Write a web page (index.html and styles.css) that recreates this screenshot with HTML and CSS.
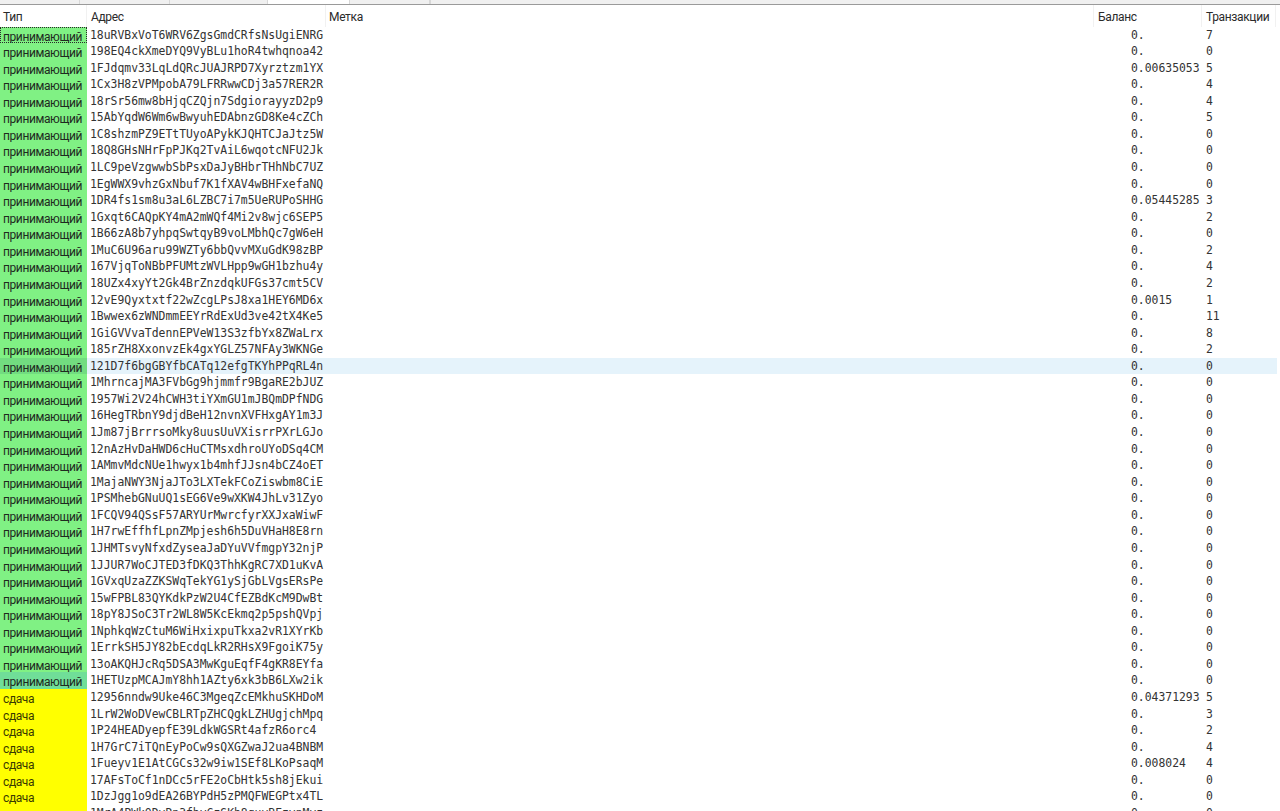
FILE: index.html
```html
<!DOCTYPE html>
<html lang="ru">
<head>
<meta charset="utf-8">
<title>Адреса</title>
<link rel="stylesheet" href="styles.css">
</head>
<body>
<div class="window">
<div class="tabs"><span class="tab t1"></span><span class="tab t2"></span><span class="tab t3"></span><span class="tab active"></span><span class="tab t5"></span><span class="tab t6"></span></div>
<div class="head"><span>Тип</span><span>Адрес</span><span>Метка</span><span>Баланс</span><span>Транзакции</span></div>
<div class="list">
<div class="row"><span class="type recv focus">принимающий</span><span class="addr">18uRVBxVoT6WRV6ZgsGmdCRfsNsUgiENRG</span><span></span><span class="bal">0.</span><span class="tx">7</span></div>
<div class="row"><span class="type recv">принимающий</span><span class="addr">198EQ4ckXmeDYQ9VyBLu1hoR4twhqnoa42</span><span></span><span class="bal">0.</span><span class="tx">0</span></div>
<div class="row"><span class="type recv">принимающий</span><span class="addr">1FJdqmv33LqLdQRcJUAJRPD7Xyrztzm1YX</span><span></span><span class="bal">0.00635053</span><span class="tx">5</span></div>
<div class="row"><span class="type recv">принимающий</span><span class="addr">1Cx3H8zVPMpobA79LFRRwwCDj3a57RER2R</span><span></span><span class="bal">0.</span><span class="tx">4</span></div>
<div class="row"><span class="type recv">принимающий</span><span class="addr">18rSr56mw8bHjqCZQjn7SdgiorayyzD2p9</span><span></span><span class="bal">0.</span><span class="tx">4</span></div>
<div class="row"><span class="type recv">принимающий</span><span class="addr">15AbYqdW6Wm6wBwyuhEDAbnzGD8Ke4cZCh</span><span></span><span class="bal">0.</span><span class="tx">5</span></div>
<div class="row"><span class="type recv">принимающий</span><span class="addr">1C8shzmPZ9ETtTUyoAPykKJQHTCJaJtz5W</span><span></span><span class="bal">0.</span><span class="tx">0</span></div>
<div class="row"><span class="type recv">принимающий</span><span class="addr">18Q8GHsNHrFpPJKq2TvAiL6wqotcNFU2Jk</span><span></span><span class="bal">0.</span><span class="tx">0</span></div>
<div class="row"><span class="type recv">принимающий</span><span class="addr">1LC9peVzgwwbSbPsxDaJyBHbrTHhNbC7UZ</span><span></span><span class="bal">0.</span><span class="tx">0</span></div>
<div class="row"><span class="type recv">принимающий</span><span class="addr">1EgWWX9vhzGxNbuf7K1fXAV4wBHFxefaNQ</span><span></span><span class="bal">0.</span><span class="tx">0</span></div>
<div class="row"><span class="type recv">принимающий</span><span class="addr">1DR4fs1sm8u3aL6LZBC7i7m5UeRUPoSHHG</span><span></span><span class="bal">0.05445285</span><span class="tx">3</span></div>
<div class="row"><span class="type recv">принимающий</span><span class="addr">1Gxqt6CAQpKY4mA2mWQf4Mi2v8wjc6SEP5</span><span></span><span class="bal">0.</span><span class="tx">2</span></div>
<div class="row"><span class="type recv">принимающий</span><span class="addr">1B66zA8b7yhpqSwtqyB9voLMbhQc7gW6eH</span><span></span><span class="bal">0.</span><span class="tx">0</span></div>
<div class="row"><span class="type recv">принимающий</span><span class="addr">1MuC6U96aru99WZTy6bbQvvMXuGdK98zBP</span><span></span><span class="bal">0.</span><span class="tx">2</span></div>
<div class="row"><span class="type recv">принимающий</span><span class="addr">167VjqToNBbPFUMtzWVLHpp9wGH1bzhu4y</span><span></span><span class="bal">0.</span><span class="tx">4</span></div>
<div class="row"><span class="type recv">принимающий</span><span class="addr">18UZx4xyYt2Gk4BrZnzdqkUFGs37cmt5CV</span><span></span><span class="bal">0.</span><span class="tx">2</span></div>
<div class="row"><span class="type recv">принимающий</span><span class="addr">12vE9Qyxtxtf22wZcgLPsJ8xa1HEY6MD6x</span><span></span><span class="bal">0.0015</span><span class="tx">1</span></div>
<div class="row"><span class="type recv">принимающий</span><span class="addr">1Bwwex6zWNDmmEEYrRdExUd3ve42tX4Ke5</span><span></span><span class="bal">0.</span><span class="tx">11</span></div>
<div class="row"><span class="type recv">принимающий</span><span class="addr">1GiGVVvaTdennEPVeW13S3zfbYx8ZWaLrx</span><span></span><span class="bal">0.</span><span class="tx">8</span></div>
<div class="row"><span class="type recv">принимающий</span><span class="addr">185rZH8XxonvzEk4gxYGLZ57NFAy3WKNGe</span><span></span><span class="bal">0.</span><span class="tx">2</span></div>
<div class="row hover"><span class="type recv">принимающий</span><span class="addr">121D7f6bgGBYfbCATq12efgTKYhPPqRL4n</span><span></span><span class="bal">0.</span><span class="tx">0</span></div>
<div class="row"><span class="type recv">принимающий</span><span class="addr">1MhrncajMA3FVbGg9hjmmfr9BgaRE2bJUZ</span><span></span><span class="bal">0.</span><span class="tx">0</span></div>
<div class="row"><span class="type recv">принимающий</span><span class="addr">1957Wi2V24hCWH3tiYXmGU1mJBQmDPfNDG</span><span></span><span class="bal">0.</span><span class="tx">0</span></div>
<div class="row"><span class="type recv">принимающий</span><span class="addr">16HegTRbnY9djdBeH12nvnXVFHxgAY1m3J</span><span></span><span class="bal">0.</span><span class="tx">0</span></div>
<div class="row"><span class="type recv">принимающий</span><span class="addr">1Jm87jBrrrsoMky8uusUuVXisrrPXrLGJo</span><span></span><span class="bal">0.</span><span class="tx">0</span></div>
<div class="row"><span class="type recv">принимающий</span><span class="addr">12nAzHvDaHWD6cHuCTMsxdhroUYoDSq4CM</span><span></span><span class="bal">0.</span><span class="tx">0</span></div>
<div class="row"><span class="type recv">принимающий</span><span class="addr">1AMmvMdcNUe1hwyx1b4mhfJJsn4bCZ4oET</span><span></span><span class="bal">0.</span><span class="tx">0</span></div>
<div class="row"><span class="type recv">принимающий</span><span class="addr">1MajaNWY3NjaJTo3LXTekFCoZiswbm8CiE</span><span></span><span class="bal">0.</span><span class="tx">0</span></div>
<div class="row"><span class="type recv">принимающий</span><span class="addr">1PSMhebGNuUQ1sEG6Ve9wXKW4JhLv31Zyo</span><span></span><span class="bal">0.</span><span class="tx">0</span></div>
<div class="row"><span class="type recv">принимающий</span><span class="addr">1FCQV94QSsF57ARYUrMwrcfyrXXJxaWiwF</span><span></span><span class="bal">0.</span><span class="tx">0</span></div>
<div class="row"><span class="type recv">принимающий</span><span class="addr">1H7rwEffhfLpnZMpjesh6h5DuVHaH8E8rn</span><span></span><span class="bal">0.</span><span class="tx">0</span></div>
<div class="row"><span class="type recv">принимающий</span><span class="addr">1JHMTsvyNfxdZyseaJaDYuVVfmgpY32njP</span><span></span><span class="bal">0.</span><span class="tx">0</span></div>
<div class="row"><span class="type recv">принимающий</span><span class="addr">1JJUR7WoCJTED3fDKQ3ThhKgRC7XD1uKvA</span><span></span><span class="bal">0.</span><span class="tx">0</span></div>
<div class="row"><span class="type recv">принимающий</span><span class="addr">1GVxqUzaZZKSWqTekYG1ySjGbLVgsERsPe</span><span></span><span class="bal">0.</span><span class="tx">0</span></div>
<div class="row"><span class="type recv">принимающий</span><span class="addr">15wFPBL83QYKdkPzW2U4CfEZBdKcM9DwBt</span><span></span><span class="bal">0.</span><span class="tx">0</span></div>
<div class="row"><span class="type recv">принимающий</span><span class="addr">18pY8JSoC3Tr2WL8W5KcEkmq2p5pshQVpj</span><span></span><span class="bal">0.</span><span class="tx">0</span></div>
<div class="row"><span class="type recv">принимающий</span><span class="addr">1NphkqWzCtuM6WiHxixpuTkxa2vR1XYrKb</span><span></span><span class="bal">0.</span><span class="tx">0</span></div>
<div class="row"><span class="type recv">принимающий</span><span class="addr">1ErrkSH5JY82bEcdqLkR2RHsX9FgoiK75y</span><span></span><span class="bal">0.</span><span class="tx">0</span></div>
<div class="row"><span class="type recv">принимающий</span><span class="addr">13oAKQHJcRq5DSA3MwKguEqfF4gKR8EYfa</span><span></span><span class="bal">0.</span><span class="tx">0</span></div>
<div class="row"><span class="type recv last">принимающий</span><span class="addr">1HETUzpMCAJmY8hh1AZty6xk3bB6LXw2ik</span><span></span><span class="bal">0.</span><span class="tx">0</span></div>
<div class="row"><span class="type change">сдача</span><span class="addr">12956nndw9Uke46C3MgeqZcEMkhuSKHDoM</span><span></span><span class="bal">0.04371293</span><span class="tx">5</span></div>
<div class="row"><span class="type change">сдача</span><span class="addr">1LrW2WoDVewCBLRTpZHCQgkLZHUgjchMpq</span><span></span><span class="bal">0.</span><span class="tx">3</span></div>
<div class="row"><span class="type change">сдача</span><span class="addr">1P24HEADyepfE39LdkWGSRt4afzR6orc4</span><span></span><span class="bal">0.</span><span class="tx">2</span></div>
<div class="row"><span class="type change">сдача</span><span class="addr">1H7GrC7iTQnEyPoCw9sQXGZwaJ2ua4BNBM</span><span></span><span class="bal">0.</span><span class="tx">4</span></div>
<div class="row"><span class="type change">сдача</span><span class="addr">1Fueyv1E1AtCGCs32w9iw1SEf8LKoPsaqM</span><span></span><span class="bal">0.008024</span><span class="tx">4</span></div>
<div class="row"><span class="type change">сдача</span><span class="addr">17AFsToCf1nDCc5rFE2oCbHtk5sh8jEkui</span><span></span><span class="bal">0.</span><span class="tx">0</span></div>
<div class="row"><span class="type change">сдача</span><span class="addr">1DzJgg1o9dEA26BYPdH5zPMQFWEGPtx4TL</span><span></span><span class="bal">0.</span><span class="tx">0</span></div>
<div class="row"><span class="type change">сдача</span><span class="addr">1MrA4PWkQDvRn3fbyCzSKh8guvBEzvpMvz</span><span></span><span class="bal">0.</span><span class="tx">0</span></div>
</div>
</div>
</body>
</html>
```
FILE: styles.css
```css
html, body {
  margin: 0;
  height: 100%;
  background: #fff;
  overflow: hidden;
}
.window {
  height: 811px;
  overflow: hidden;
  font-family: Roboto, "Noto Sans", sans-serif;
  font-size: 12px;
  letter-spacing: -0.35px;
  color: #2a2a2a;
}
.tabs {
  display: flex;
  height: 4px;
  background: #f0f0f0;
  border-bottom: 1px solid #9a9a9a;
}
.tab {
  border-right: 1px solid #d8d8d8;
}
.t1 { width: 79px; }
.t2 { width: 89px; }
.t3 { width: 97px; }
.active { width: 81px; background: #fff; }
.t5 { width: 79px; }
.t6 { width: 0; }
.head, .row {
  display: grid;
  grid-template-columns: 87px 239px 768px 108px 1fr;
}
.head {
  height: 21.5px;
  margin-right: 4px;
}
.head span {
  padding-left: 4px;
  line-height: 24px;
  height: 21.5px;
  box-sizing: border-box;
  border-right: 1px solid #f1f1f1;
  white-space: nowrap;
}
.head span:first-child { padding-left: 3px; }
.head span:nth-child(3) { padding-left: 3px; }
.list {
  margin-right: 3px;
}
.row {
  height: 16.57px;
  line-height: 16.57px;
  grid-template-rows: 16.57px;
}
.row.hover { background: #e5f3fb; }
.type {
  padding-left: 3px;
  padding-top: 2px;
  box-sizing: border-box;
  color: #1f2a1f;
  font-size: 12px;
  letter-spacing: -0.4px;
  white-space: nowrap;
}
.recv { background: #80f184; }
.hover .recv { background: #72dc80; }
.last { background: #70de98; }
.change { background: #ffff00; color: #3a3a00; }
.focus { outline: 1px dotted #2a2a2a; outline-offset: -1px; }
.addr, .bal, .tx {
  font-family: "DejaVu Sans Mono", monospace;
  font-size: 11.4px;
  letter-spacing: 0;
  color: #333;
  white-space: nowrap;
}
.addr { padding-left: 3px; }
.bal { padding-left: 37px; }
.tx { padding-left: 4px; }
```
